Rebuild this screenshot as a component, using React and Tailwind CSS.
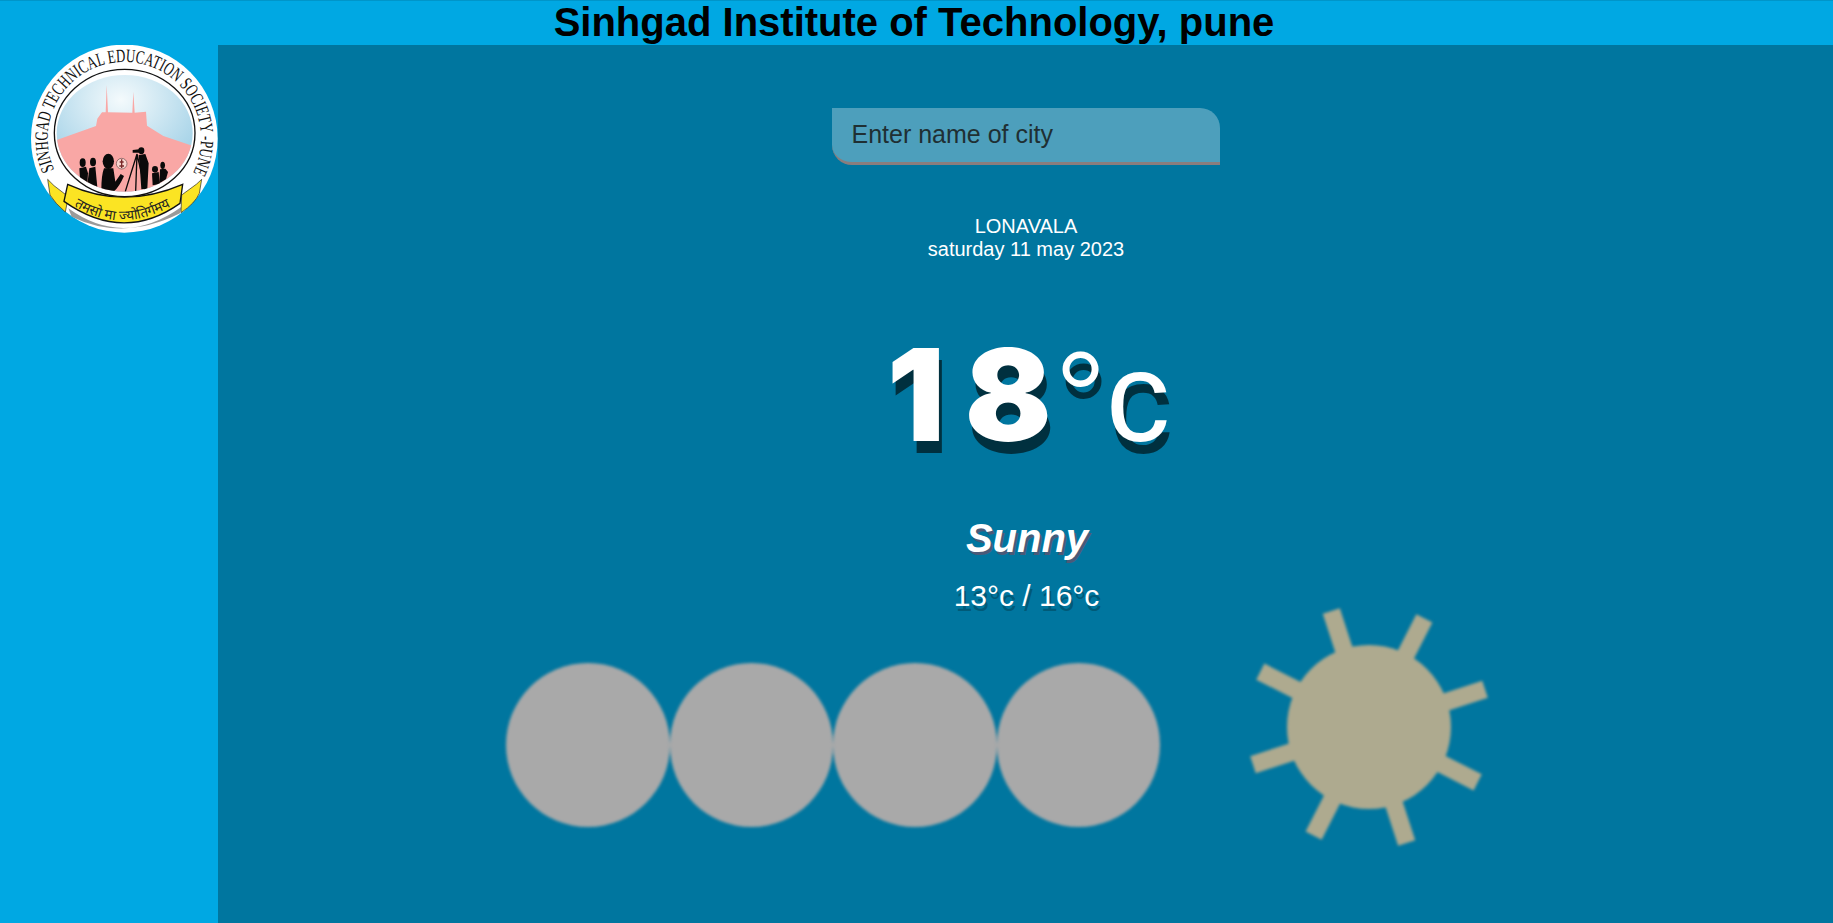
const Logo = () => (
  <svg viewBox="93 135 561 564" className="w-[187px] h-[188px] block">
    <defs>
      <radialGradient id="sky" cx="0.47" cy="0.22" r="0.62">
        <stop offset="0" stopColor="#f4fafc" />
        <stop offset="1" stopColor="#a6d3e8" />
      </radialGradient>
      <clipPath id="inner">
        <ellipse cx="374" cy="400" rx="204" ry="175" />
      </clipPath>
      <path id="rim" d="M163,509.5 A 230 230 0 1 1 578,520" />
      <path id="band" d="M222,618 Q 370,708 530,608" />
    </defs>

    <ellipse cx="373" cy="416" rx="280" ry="282" fill="#fff" />

    {/* grey under the ribbon */}
    <path d="M205,625 Q 370,745 545,620 L 540,640 Q 370,725 215,650 Z" fill="#9a9a9a" />

    <text fontFamily="'Liberation Serif', serif" fontSize="56" fill="#111">
      <textPath href="#rim" textLength="925" lengthAdjust="spacingAndGlyphs">SINHGAD TECHNICAL EDUCATION SOCIETY -PUNE</textPath>
    </text>

    <ellipse cx="374" cy="399" rx="211" ry="191" fill="#fff" stroke="#111" strokeWidth="4" />
    <g clipPath="url(#inner)">
      <rect x="160" y="220" width="430" height="360" fill="url(#sky)" />
      <path
        d="M165,422 L288,378 L292,356 L306,337 L317,337 L320,255 L324,337 L397,338 L400,275 L404,338 L438,335 L441,377 L490,408 L585,440 L585,590 L165,590 Z"
        fill="#f9a7a5"
      />
      {/* people and the surveyor */}
      <g fill="#0a0a0a">
        <ellipse cx="248" cy="488" rx="9" ry="13" />
        <path d="M238,505 L258,500 L264,520 L262,552 L240,538 Z" />
        <ellipse cx="279" cy="486" rx="9" ry="13" />
        <path d="M268,505 L286,500 L292,562 L262,552 Z" />
        <ellipse cx="325" cy="484" rx="17" ry="23" />
        <path d="M312,505 L340,505 L346,545 L362,522 L372,528 Q358,560 342,574 L304,570 Q304,525 312,505 Z" />
        <path d="M398,450 L430,446 L430,458 L398,458 Z" />
        <ellipse cx="424" cy="452" rx="9" ry="10" />
        <path d="M416,465 L436,462 L446,490 L442,566 L424,568 L420,510 Z" />
        <ellipse cx="465" cy="508" rx="9" ry="10" />
        <path d="M456,520 L476,516 L480,552 L458,556 Z" />
        <ellipse cx="488" cy="496" rx="7" ry="11" />
        <path d="M480,508 L496,506 L504,516 L498,538 L478,550 Z" />
      </g>
      <g stroke="#0a0a0a" strokeWidth="4" fill="none">
        <path d="M411,462 L376,574 M411,462 L407,574 M411,462 L436,570" />
      </g>
      <circle cx="365" cy="491" r="16" fill="#f7d5cf" stroke="#6b4a4a" strokeWidth="2" />
      <path d="M365,478 L365,504 M359,486 L371,486 M358,498 L372,498" stroke="#7a2a2a" strokeWidth="4" />
    </g>

    {/* ribbon tails */}
    <path d="M143,538 L162,557 L205,590 L196,636 Q165,610 150,585 Z" fill="#fbe423" stroke="#222" strokeWidth="2" />
    <path d="M605,538 L590,552 L545,585 L543,638 Q585,610 598,580 Z" fill="#fbe423" stroke="#222" strokeWidth="2" />
    {/* ribbon */}
    <path
      d="M203,553 Q370,630 548,553 L540,610 Q370,730 192,604 Z"
      fill="#fbe423"
      stroke="#111"
      strokeWidth="4"
    />
    <text fontFamily="'Noto Sans', 'DejaVu Sans', sans-serif" fontSize="41" fill="#222">
      <textPath href="#band">तमसो मा ज्योतिर्गमय</textPath>
    </text>
  </svg>
);

const Sun = () => {
  const rays = [27, 72, 117, 162, 207, 252, 297, 342];
  return (
    <svg viewBox="-124 -124 248 248" className="w-[248px] h-[248px] blur-[1.5px] shrink-0">
      <circle r="82" fill="#aeaa8f" />
      {rays.map((a) => (
        <rect key={a} x="-9" y="-122" width="18" height="50" fill="#aeaa8f" transform={`rotate(${a})`} />
      ))}
    </svg>
  );
};

export default function App() {
  return (
    <div className="h-screen flex flex-col overflow-hidden font-['Liberation_Sans',Arial,sans-serif] bg-[#00a8e3]">
      <header className="h-[45px] shrink-0 border-t border-[#0095c9] text-center">
        <h1 className="text-[40px] leading-[43px] font-bold text-black pr-[5px]">Sinhgad Institute of Technology, pune</h1>
      </header>

      <div className="flex-1 flex min-h-0">
        <aside className="w-[218px] shrink-0 pl-[31px]">
          <Logo />
        </aside>

        <main className="flex-1 bg-[#00769f] flex flex-col">
          <div className="flex flex-col items-center text-white">
            <input
              placeholder="Enter name of city"
              className="mt-[63px] w-[388px] h-[57px] px-5 pb-[2px] text-[25px] bg-white/30 text-[#1f2f33] placeholder:text-[#1f2f33] placeholder:opacity-100 border-b-[3px] border-[#8a7d7d] rounded-tr-[20px] rounded-bl-[20px] outline-none"
            />
            <div className="mt-[50px] pl-px text-xl leading-[23px] text-center">
              <div>LONAVALA</div>
              <div>saturday 11 may 2023</div>
            </div>
            <div className="mt-[62px] text-[128px] leading-[147px] [text-shadow:3px_12px_0_#00303f] pl-[6px] flex">
              <span className="inline-block w-[168px] -mt-[2px] font-['Inter',sans-serif] font-black whitespace-nowrap">
                <span className="tracking-[20px]">1</span>8
              </span>
              <span>°c</span>
            </div>
            <div className="mt-[45px] pl-[3px] text-[40px] leading-[46px] font-bold italic [text-shadow:2px_3px_0_#4a5a78]">Sunny</div>
            <div className="mt-[17px] pl-[2px] text-[30px] leading-[35px] [text-shadow:2px_5px_0_#005a78]">13°c / 16°c</div>
          </div>

          <div className="mt-[-10px] pl-[288px] flex items-start gap-[85px]">
            <div className="mt-[60px] flex blur-[1.5px]">
              <div className="w-[163.5px] h-[164px] rounded-full bg-[#a9a9a9]" />
              <div className="w-[163.5px] h-[164px] rounded-full bg-[#a9a9a9]" />
              <div className="w-[163.5px] h-[164px] rounded-full bg-[#a9a9a9]" />
              <div className="w-[163.5px] h-[164px] rounded-full bg-[#a9a9a9]" />
            </div>
            <Sun />
          </div>
        </main>
      </div>
    </div>
  );
}
